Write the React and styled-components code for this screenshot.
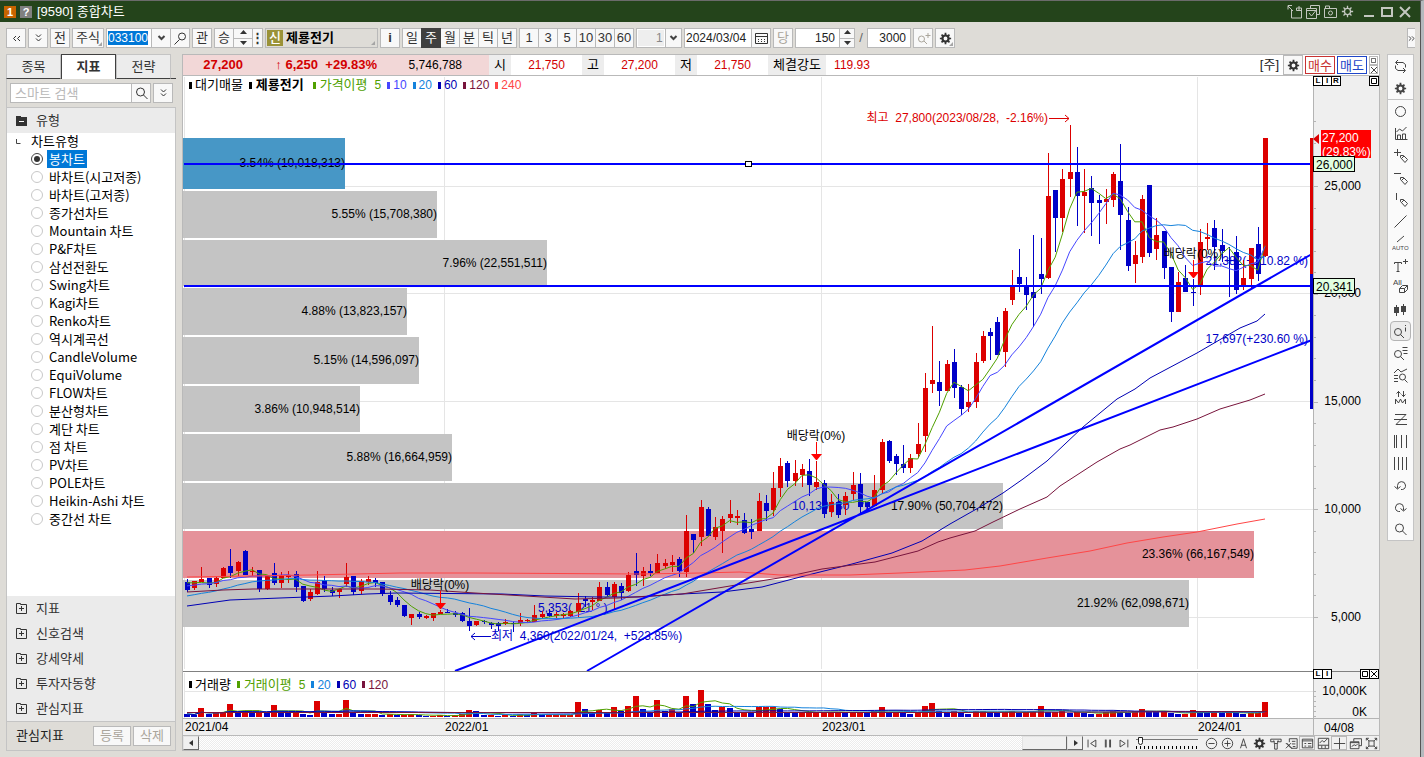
import React, { useState } from "react";
import styled, { createGlobalStyle, css } from "styled-components";

const GlobalStyle = createGlobalStyle`
  * {
    box-sizing: border-box;
  }
  body {
    margin: 0;
    background: #dedcd7;
  }
  body, button, input, select {
    font-family: "Liberation Sans", "Noto Sans CJK KR", sans-serif;
    font-size: 13px;
    line-height: 16px;
    color: #222;
  }
  button, input, select {
    margin: 0;
    padding: 0;
    border-radius: 0;
    outline: none;
  }
  svg {
    flex: none;
  }
  ::selection {
    background: #0078d7;
    color: #fff;
  }
`;

const Window = styled.div`
  display: flex;
  flex-direction: column;
  min-height: 100vh;
  border-top: 1px solid #6b6b6b;
  border-right: 3px solid #b4b9bd;
  box-shadow: inset -1px 0 #555;
  overflow: hidden;
`;

const TitleBar = styled.header`
  display: flex;
  align-items: center;
  gap: 4px;
  height: 21px;
  margin-right: 1px;
  padding: 0 7px 0 4px;
  background: #24441b;
  color: #fff;
`;

const TitleBadge = styled.span`
  width: 12px;
  height: 12px;
  background: ${({ bg }) => bg};
  font-size: 11px;
  font-weight: 700;
  line-height: 12px;
  text-align: center;
`;

const Title = styled.h1`
  flex: 1;
  margin: 0 0 0 1px;
  font-size: 13px;
  font-weight: 400;
`;

const TitleButton = styled.button`
  display: flex;
  align-items: center;
  width: ${({ w }) => w || 14}px;
  height: 15px;
  border: 0;
  background: none;
  color: #c3c7c0;
`;

const Toolbar = styled.div`
  display: flex;
  align-items: center;
  gap: 2px;
  height: 32px;
  padding-left: 6px;
`;

const Group = styled.div`
  display: flex;
  height: 20px;
  & > * + * {
    margin-left: -1px;
  }
`;

const ToolButton = styled.button`
  display: flex;
  flex: none;
  align-items: center;
  justify-content: center;
  position: relative;
  width: ${({ w }) => w || 20}px;
  height: 20px;
  border: 1px solid #b9b9b9;
  background: #f8f8f8;
  color: ${({ dim }) => (dim ? "#aaa59b" : "#333")};
  font-weight: ${({ bold }) => (bold ? 700 : 400)};
  ${({ active }) =>
    active &&
    css`
      z-index: 1;
      border-color: #404040;
      background: #404040;
      color: #fff;
    `}
  ${({ corner }) =>
    corner &&
    css`
      &::after {
        content: "";
        position: absolute;
        right: 1px;
        bottom: 1px;
        border: 2px solid;
        border-color: transparent #a5a5a5 #a5a5a5 transparent;
      }
    `}
`;

const Field = styled.input`
  width: ${({ w }) => w}px;
  height: 20px;
  padding: 0 ${({ pad }) => pad || 1}px;
  border: 1px solid #b9b9b9;
  background: #fff;
  font-size: 12px;
  text-align: ${({ align }) => align || "left"};
`;

const UnitSelect = styled.select`
  width: 30px;
  height: 20px;
  padding-left: 19px;
  appearance: none;
  border: 1px solid #b9b9b9;
  background: #eee;
  box-shadow: inset 0 0 0 1px #fff;
  color: #888;
  font-size: 12px;
`;

const Spinner = styled.div`
  display: flex;
  flex-direction: column;
  width: ${({ w }) => w || 16}px;
  height: 20px;
`;

const SpinButton = styled.button`
  display: flex;
  flex: 1;
  align-items: center;
  justify-content: center;
  border: 1px solid #b9b9b9;
  background: #f8f8f8;
  & + & {
    border-top: 0;
  }
`;

const StockName = styled.button`
  display: flex;
  align-items: center;
  position: relative;
  width: 113px;
  height: 20px;
  padding: 0 1px;
  gap: 3px;
  border: 1px solid #b9b9b9;
  background: #dedcd7;
  color: #000;
  font-weight: 700;
  &::after {
    content: "";
    position: absolute;
    right: 2px;
    bottom: 2px;
    border: 2px solid;
    border-color: transparent #a5a5a5 #a5a5a5 transparent;
  }
`;

const StockMark = styled.span`
  width: 16px;
  height: 16px;
  background: #9a9238;
  color: #fff;
  font-weight: 500;
  line-height: 15px;
`;

const Slash = styled.span`
  width: 8px;
  color: #666;
  text-align: center;
`;

const MoreButton = styled(ToolButton)`
  margin: 0 6px 0 auto;
  border-right: 0;
`;

const Body = styled.div`
  display: flex;
  flex: 1;
  gap: 7px;
  padding: 0 7px 6px 6px;
`;

const Sidebar = styled.aside`
  display: flex;
  flex: none;
  flex-direction: column;
  width: 170px;
  margin-right: -1px;
`;

const Tabs = styled.div`
  display: flex;
  height: 25px;
  border-bottom: 1px solid #404040;
`;

const Tab = styled.button`
  width: 55px;
  height: 25px;
  border: 1px solid ${({ active }) => (active ? "#404040" : "#c4c4c4")};
  border-bottom: ${({ active }) => (active ? "0" : "1px solid #404040")};
  background: ${({ active }) => (active ? "#fff" : "#ececec")};
  color: #333;
  font-weight: ${({ active }) => (active ? 700 : 400)};
`;

const SearchRow = styled.form`
  display: flex;
  height: 28px;
  padding: 4px 3px;
  border-left: 1px solid #c4c4c4;
`;

const SearchField = styled.input`
  flex: 1;
  min-width: 0;
  height: 20px;
  padding: 0 4px;
  border: 1px solid #b9b9b9;
  border-right: 0;
  font-size: 13px;
  &::placeholder {
    color: #b9b9b9;
  }
`;

const DropButton = styled(ToolButton)`
  margin-left: 2px;
`;

const Folder = styled.button`
  display: flex;
  flex: none;
  align-items: center;
  gap: 9px;
  height: 25px;
  padding: 0 9px;
  border: 0;
  background: #ebebeb;
  color: #333;
`;

const Panel = styled.div`
  display: flex;
  flex: 1;
  flex-direction: column;
  border: 1px solid #c4c4c4;
`;

const Tree = styled.fieldset`
  flex: 1;
  margin: 0;
  min-width: 0;
  padding: 0 0 0 24px;
  border: 0;
  background: #fff;
`;

const TreeTitle = styled.div`
  display: flex;
  align-items: center;
  gap: 10px;
  height: 17px;
  margin-left: -16px;
  color: #000;
`;

const Option = styled.label`
  display: flex;
  align-items: center;
  gap: 4px;
  height: 18px;
  color: #000;
  font-family: "Noto Sans CJK KR", sans-serif;
  & > span {
    padding: 0 2px;
    height: 18px;
    line-height: 18px;
  }
  & > input {
    flex: none;
    display: grid;
    place-items: center;
    width: 12px;
    height: 12px;
    appearance: none;
    border: 1px solid #c8c8c8;
    border-radius: 50%;
    background: #fff;
  }
  & > input:checked {
    border-color: #444;
  }
  & > input:checked::after {
    content: "";
    width: 6px;
    height: 6px;
    border-radius: 50%;
    background: #333;
  }
  & > input:checked + span {
    background: #0078d7;
    color: #fff;
  }
`;

const PanelFooter = styled.div`
  display: flex;
  align-items: center;
  gap: 2px;
  height: 29px;
  padding: 0 4px 0 9px;
  border-top: 1px solid #c4c4c4;
  & > span {
    flex: 1;
  }
`;

const Main = styled.main`
  flex: 1;
  min-width: 0;
  border: 1px solid #b9b9b9;
  background: #fff;
`;

const Quote = styled.div`
  display: flex;
  height: 21px;
  border-bottom: 1px solid #b9b9b9;
  line-height: 20px;
`;

const QuoteMain = styled.div`
  display: flex;
  width: 306px;
  background: #f2d7d7;
  color: #d20000;
  font-weight: 700;
  text-align: right;
  & > span:nth-child(1) {
    width: 60px;
  }
  & > span:nth-child(2) {
    width: 75px;
  }
  & > span:nth-child(3) {
    width: 59px;
  }
  & > span:nth-child(4) {
    width: 85px;
    color: #000;
    font-size: 12px;
    font-weight: 400;
  }
`;

const QuoteLabel = styled.span`
  width: ${({ w }) => w || 22}px;
  background: #ededed;
  color: #000;
  text-align: center;
`;

const QuoteValue = styled.span`
  width: ${({ w }) => w || 71}px;
  color: #d20000;
  font-size: 12px;
  text-align: center;
`;

const QuoteActions = styled.div`
  display: flex;
  align-items: center;
  gap: 2px;
  margin-left: auto;
  & > span {
    margin-right: 2px;
  }
`;

const TradeButton = styled.button`
  width: 30px;
  height: 18px;
  border: 1px solid ${({ tone }) => tone};
  background: #fff;
  color: ${({ tone }) => tone};
  line-height: 15px;
`;

const MiniStack = styled.div`
  display: flex;
  flex-direction: column;
  width: 10px;
  & > button {
    display: flex;
    align-items: center;
    justify-content: center;
    width: 9px;
    height: 9px;
    border: 1px solid #b9b9b9;
    background: #fff;
    color: #444;
  }
`;

const ChartArea = styled.div`
  position: relative;
  & > svg {
    display: block;
    width: 100%;
    height: auto;
  }
`;

const Legend = styled.div`
  position: absolute;
  top: ${({ top }) => top}%;
  left: 6px;
  display: flex;
  gap: 6px;
  height: 18px;
`;

const LegendName = styled.span`
  display: flex;
  align-items: center;
  gap: ${({ wide }) => (wide ? 4 : 3)}px;
  color: ${({ tone }) => tone};
  font-size: 12px;
  font-weight: ${({ bold }) => (bold ? 700 : 400)};
  & > b {
    margin-right: ${({ wide }) => (wide ? 3 : 0)}px;
    font-weight: inherit;
    font-size: 13px;
  }
  &::before {
    content: "";
    width: 3px;
    height: 7px;
    background: currentColor;
  }
`;

const CornerButtons = styled.div`
  position: absolute;
  top: ${({ top }) => top}%;
  right: 1px;
  display: flex;
  width: 65px;
  & > button {
    display: flex;
    align-items: center;
    justify-content: center;
    width: 10px;
    height: 10px;
    margin-right: -1px;
    border: 1px solid #000;
    background: #fff;
    color: #000;
    font-size: 8px;
    font-weight: 700;
    line-height: 8px;
  }
  & > i {
    flex: 1;
  }
`;

const BottomBar = styled.div`
  display: flex;
  height: 15px;
  border-top: 1px solid #b9b9b9;
  background: #f0f0f0;
`;

const ScrollTrack = styled.div`
  display: flex;
  flex: 1;
  background: repeating-conic-gradient(#fff 0 25%, #ececec 0 50%) 0 0 / 2px 2px;
`;

const ScrollButton = styled.button`
  display: flex;
  align-items: center;
  justify-content: center;
  width: ${({ w }) => w || 16}px;
  height: 14px;
  border: 1px solid;
  border-color: #e3e3e3 #696969 #696969 #e3e3e3;
  background: #f0f0f0;
`;

const ScrollGap = styled.i`
  flex: 1;
`;

const BarButton = styled.button`
  display: flex;
  align-items: center;
  justify-content: center;
  width: 16px;
  height: 14px;
  border: ${({ pressed }) => (pressed ? "1px solid #b9b9b9" : "0")};
  background: none;
  color: #333;
`;

const Zoom = styled.input`
  appearance: none;
  width: 62px;
  height: 14px;
  margin: 0 5px 0 5px;
  background:
    linear-gradient(#777, #777) 0 3px / 100% 1px no-repeat,
    repeating-linear-gradient(90deg, #000 0 1px, transparent 1px 4px) 0 10px / 100% 3px no-repeat;
  &::-webkit-slider-thumb {
    appearance: none;
    width: 5px;
    height: 8px;
    margin-top: -5px;
    border: 1px solid #222;
    border-radius: 0 0 3px 3px;
    background: #fff;
  }
`;

const ToolStrip = styled.nav`
  align-self: flex-start;
  display: flex;
  flex: none;
  flex-direction: column;
  width: 27px;
  border: 1px solid #c4c4c4;
  background: #fafafa;
`;

const StripButton = styled.button`
  display: flex;
  align-items: center;
  justify-content: center;
  height: 22px;
  border: 0;
  background: none;
  color: #444;
  ${({ active }) =>
    active &&
    css`
      height: 20px;
      margin: 1px 2px;
      border: 1px solid #b4b4b4;
      border-radius: 4px;
      background: #ececec;
    `}
`;

const StripRule = styled.hr`
  width: 100%;
  margin: 0;
  border: 0;
  border-top: 1px solid #c4c4c4;
`;

const paths = {
  search: "M10.5 6a4 4 0 1 1-8 0a4 4 0 0 1 8 0M9.5 9l4 4",
  searchLeft: "M12.5 5.5a3.5 3.5 0 1 1-7 0a3.5 3.5 0 0 1 7 0M6.5 8.5l-5 5",
  chevrons: "M5 3.5l2.5 2.5l2.5-2.5M5 7.5l2.5 2.5l2.5-2.5",
  chevronsLeft: "M7 5l-2.5 2.5l2.5 2.5M11 5l-2.5 2.5l2.5 2.5",
  chevronsRight: "M4.5 5l2.5 2.5l-2.5 2.5M8 5l2.5 2.5l-2.5 2.5",
  calendar: "M1.5 2.5h12v10h-12zM1.5 5.5h12M4 8.5h1M7 8.5h1M10 8.5h1M4 10.5h1M7 10.5h1M10 10.5h1",
  searchPlus: "M8.5 8a3 3 0 1 1-6 0a3 3 0 0 1 6 0M8 10l3 3M9.5 4.5h5M12 2v5",
  searchInfo: "M8.5 8a3.5 3.5 0 1 1-7 0a3.5 3.5 0 0 1 7 0M7.5 10.5l3.5 3.5M12.5 1v1M12.5 3.5v4",
  searchList: "M8.5 8a3.5 3.5 0 1 1-7 0a3.5 3.5 0 0 1 7 0M7.5 10.5l3.5 3.5M9.5 1.5h5M9.5 4.5h5M10.5 7.5h4",
  undock: "M4.5 6v8h10v-10h-5M9.5 4v2.5h5M12 2v4M1 2l5 5M1 5.5v-4h4",
  windows: "M5.5 4.5v-3h9v9h-3M1.5 4.5h10v10h-10zM1.5 6.5h10M4 9l2.5 3l4-5",
  camera: "M1.5 4.5h12v9h-12zM2.5 4v-2h4v2M9.5 9a2 2 0 1 1-4 0a2 2 0 0 1 4 0",
  refresh: "M5 1l-2.5 2.5l2.5 2.5M3 3.5h7l2.5 2v3M10 14l2.5-2.5l-2.5-2.5M12 11.5h-7l-2.5-2v-3",
  circle: "M12.5 7.5a5 5 0 1 1-10 0a5 5 0 0 1 10 0",
  bars: "M2.5 2v11.5h12M4.5 13v-4h3v4M9.5 13v-5h3v5M3.5 6l3-3l3 2l4-4",
  penPlus: "M4.5 1v7M1 4.5h7M7.5 7.5h3l4 4l-2.5 3l-4.5-5zM9 10l2-2",
  penLine: "M1 3.5h7M7.5 7.5h3l4 4l-2.5 3l-4.5-5zM9 10l2-2",
  penVert: "M3.5 1v7M7.5 7.5h3l4 4l-2.5 3l-4.5-5zM9 10l2-2",
  line: "M1.5 13.5l12-12",
  text: "M1.5 6v-1.5h7v1.5M5 5v8.5M3.5 13.5h3M10 3.5h5M12.5 1v5",
  erase: "M6.5 9.5h5v4h-5zM6.5 9.5l3-3h5l-3 3M14.5 6.5v4l-3 3",
  indicator: "M1 5l4-4l3 3l6-3M1 7.5h4M1 10.5h4M1 13.5h4M12.5 9a3 3 0 1 1-6 0a3 3 0 0 1 6 0M11.5 11.5l3 3",
  updown: "M5.5 1v6M3.5 3.5l2-2l2 2M10.5 1v6M8.5 4.5l2 2l2-2M2.5 14v-5l3 4l2-4l2 4l3-4v5",
  zed: "M2 2.5h11l-10 10h11M1 7.5h13",
  vbarsA: "M1.5 1v13M3.5 1v13M8.5 1v13M13.5 1v13",
  vbarsB: "M1.5 1v13M5.5 1v13M9.5 1v13M13.5 1v13",
  undo: "M8 11.5h1.5a4 4 0 1 0-5-4v3M1.5 8.5l3 2.5l3-2.5",
  redo: "M7 11.5h-1.5a4 4 0 1 1 5-4v3M13.5 8.5l-3 2.5l-3-2.5",
  first: "M3.5 3v9M12.5 3.5v8l-6-4z",
  pause: "M5 3v9M6 3v9M10 3v9M11 3v9",
  last: "M12.5 3v9M3.5 3.5v8l6-4z",
  minus: "M13.5 7.5a6 6 0 1 1-12 0a6 6 0 0 1 12 0M4 7.5h7",
  plus: "M13.5 7.5a6 6 0 1 1-12 0a6 6 0 0 1 12 0M4 7.5h7M7.5 4v7",
  letter: "M4 13l3.5-11l3.5 11M5 9.5h5",
  hammer: "M2 5.5v-3h12v3h-3v-1h-1v3h-4v-3h-1v1zM6.5 8v6h3v-6",
  excel: "M5 6v-4h9v11h-7M8 5h4M8 8h4M9 11h3M1 7l6 6M7 7l-6 6M2 7l6 6",
  table: "M1.5 2.5h12v10h-12zM1.5 4.5h12M4 7.5h2M4 10.5h2M8 7.5h4M8 10.5h4",
  preview: "M1.5 1.5h12v12h-12zM1.5 9.5h12M5.5 10v3M9.5 10v3M3 7l3-3l2 2l4-4",
  cross: "M7.5 1v13M1 7.5h13",
  stack: "M5.5 5v-3h9v8h-3M1.5 5.5h10v8h-10zM1.5 6.5h10M3 11l3-2l2 1l2-2",
  expand: "M4.5 4.5h6v6h-6zM1.5 4v-2.5h3M11 1.5h2.5v2.5M13.5 11v2.5h-2.5M4 13.5h-2.5v-2.5M1.5 1.5l3 3M13.5 1.5l-3 3M1.5 13.5l3-3M13.5 13.5l-3-3",
};

const Icon = ({ name, size = 15 }) => (
  <svg width={size} height={size} viewBox="0 0 15 15" fill="none" stroke="currentColor">
    <path d={paths[name]} />
  </svg>
);

const Gear = ({ size = 15, thin }) => (
  <svg width={size} height={size} viewBox="0 0 15 15" fill="none" stroke="currentColor">
    <circle cx="7.5" cy="7.5" r="3.5" strokeWidth={thin ? 1.5 : 2.5} />
    {[0, 45, 90, 135].map((a) => (
      <path
        key={a}
        d="M7.5 1v2.5M7.5 11.5v2.5"
        strokeWidth={thin ? 1.5 : 2}
        transform={`rotate(${a} 7.5 7.5)`}
      />
    ))}
  </svg>
);

const Triangle = ({ dir = "up" }) => {
  const d = {
    up: "M0 4l3.5-4l3.5 4z",
    down: "M0 1h7l-3.5 4z",
    left: "M5 0v6l-4-3z",
    right: "M2 0v6l4-3z",
  };
  return (
    <svg width="7" height="6" viewBox="0 0 7 6" fill="#333">
      <path d={d[dir]} />
    </svg>
  );
};

const Chevron = () => (
  <svg width="9" height="6" viewBox="0 0 9 6" fill="none" stroke="#444" strokeWidth="2">
    <path d="M1.5 1l3 3l3-3" />
  </svg>
);

const BoxMark = ({ size = 6 }) => (
  <svg width={size} height={size} viewBox="0 0 6 6" fill="none" stroke="currentColor">
    <path d="M.5 .5h5v5h-5z" />
  </svg>
);

const CrossMark = () => (
  <svg width="6" height="6" viewBox="0 0 6 6" stroke="currentColor">
    <path d="M0 0l6 6M6 0l-6 6" />
  </svg>
);

const AutoIcon = () => (
  <svg width="17" height="16" viewBox="0 0 17 16" stroke="currentColor">
    <path d="M5 7l7-6" />
    <text x="0" y="15" fontSize="6" fill="currentColor" strokeWidth="0">AUTO</text>
  </svg>
);

const EraseIcon = () => (
  <svg width="16" height="16" viewBox="0 0 16 16" fill="none" stroke="currentColor">
    <path d={paths.erase} />
    <text x="0" y="6" fontSize="8" fill="currentColor" strokeWidth="0">All</text>
  </svg>
);

const CandleIcon = () => (
  <svg width="15" height="15" viewBox="0 0 15 15" fill="currentColor">
    <path d="M1 5h5v6h-5zM3 3h1v11h-1zM8 4h5v6h-5zM10 2h1v11h-1z" />
  </svg>
);

// side, body top, body bottom, high, low
const candles = `B582,590,579,592 R581,588,581,590 R579,582,567,582 B578,585,578,588 R578,584,576,587
R568,578,567,578 B566,573,549,578 R562,571,561,576 B551,575,550,575 R571,572,567,576
B570,589,570,592 R576,589,576,590 B573,583,563,585 R575,583,572,588 R575,577,571,583
B574,587,571,592 B586,601,586,602 R592,599,589,601 R582,594,571,595 B580,589,576,592
B590,593,587,596 R589,592,589,598 R577,584,563,587 B576,592,576,595 R581,591,579,594
R579,582,576,585 B580,583,578,587 B582,594,582,596 B595,602,591,605 B600,605,597,607
B605,616,605,617 R614,618,614,625 B614,617,612,619 R616,618,615,619 R613,618,613,621
R612,614,610,614 B612,613,609,613 B613,615,611,617 B613,621,612,622 B621,626,608,631
R621,625,621,626 B621,622,620,624 B623,625,622,629 B623,626,622,631 R622,624,619,625
B623,624,622,632 R620,623,613,626 R620,621,619,622 R615,622,605,622 R614,617,611,618
B613,616,609,617 R614,616,612,618 R614,616,613,619 R611,616,610,617 R603,612,593,617
B599,601,596,607 R600,602,597,610 R587,601,582,601 B587,595,582,596 R584,597,582,609
B586,593,583,600 R575,591,572,592 B571,575,553,586 R571,576,567,586 B571,573,564,576
R563,573,554,573 R563,566,559,569 R562,565,555,572 B559,571,557,577 R531,572,515,577
B534,540,534,553 R507,537,500,546 B509,536,507,536 R527,537,517,540 R519,531,516,553
R514,518,500,523 R516,518,510,525 B520,533,513,534 B529,532,519,539 R501,531,493,531
B503,511,495,521 R488,510,472,516 R466,488,458,497 B463,481,461,487 R473,481,460,486
R469,475,464,487 B471,485,459,496 R482,487,461,490 B483,514,480,518 R502,512,494,517
B502,515,494,518 R496,505,492,515 R485,494,472,500 B484,507,473,513 B502,507,502,509
R490,506,475,506 R442,490,439,493 B441,461,440,463 B456,464,454,475 B464,468,445,473
R458,468,454,473 R444,454,423,458 R388,436,373,452 R380,384,326,393 B382,391,361,406
R364,391,360,391 B362,388,349,398 B387,409,385,415 R402,407,384,412 R362,402,353,408
R336,361,331,363 B332,336,328,360 B322,355,317,355 R311,352,308,367 R286,300,270,305
B277,284,249,292 B287,295,277,310 B292,298,235,327 B274,279,238,294 R196,278,153,279
B190,218,190,252 R179,218,169,232 R172,179,125,197 B172,196,147,226 R192,196,169,233
B188,203,176,236 B200,203,195,244 R199,202,189,224 R174,200,172,207 B181,215,144,250
B220,266,207,271 R255,264,241,283 R199,257,195,263 B185,253,185,257 R235,249,218,260
B231,268,231,279 B267,312,267,322 R282,312,272,312 B278,292,265,292 B292,293,279,306
R242,285,229,295 R237,239,223,250 B228,247,220,270 B245,251,229,262 B260,261,247,297
B252,290,236,294 R278,285,260,290 R248,279,248,289 B244,274,227,281 R138,256,138,257`
  .split(/\s+/)
  .map((s) => {
    const [top, bottom, high, low] = s.slice(1).split(",").map(Number);
    return { up: s[0] === "R", top, bottom, high, low, close: s[0] === "R" ? top : bottom };
  });

const volumes = [
  3, 2, 9, 3, 4, 5, 13, 4, 6, 4, 5, 4, 12, 6, 4, 5, 3, 2, 16, 4, 3, 3, 17, 4, 3, 3, 3, 2, 3, 2,
  2, 3, 2, 1, 1, 2, 1, 2, 3, 7, 6, 2, 2, 1, 2, 1, 3, 2, 4, 2, 2, 2, 2, 2, 15, 8, 4, 7, 5, 10,
  6, 11, 21, 8, 4, 17, 6, 8, 4, 21, 13, 27, 13, 7, 10, 9, 5, 5, 4, 10, 10, 10, 8, 5, 4, 5, 5, 5, 5, 5,
  5, 4, 5, 5, 4, 6, 10, 5, 5, 4, 3, 5, 11, 14, 6, 4, 6, 5, 3, 6, 6, 5, 4, 5, 6, 4, 5, 6, 11, 5,
  5, 6, 4, 5, 4, 3, 3, 5, 6, 5, 4, 6, 8, 6, 5, 5, 4, 3, 3, 7, 5, 4, 5, 4, 5, 4, 3, 4, 4, 15,
];

const history = [...Array(10).fill(606), ...Array(5).fill(589), ...Array(4).fill(581)];
const closes = [...history, ...candles.map((c) => c.close)];

const xOf = (i) => 187 + (i * 1078) / 149;

const average = (list, from, n) => {
  const part = list.slice(Math.max(0, from - n + 1), from + 1);
  return part.reduce((a, b) => a + b, 0) / part.length;
};

const priceLine = (n) =>
  candles.map((c, i) => `${xOf(i)},${average(closes, i + history.length, n)}`).join(" ");

const volumeLine = (n) => volumes.map((v, i) => `${xOf(i)},${717 - average(volumes, i, n)}`).join(" ");

const longLines = [
  {
    color: "#0000b4",
    points:
      "187,606 230,600 280,598 333,596 367,594 397,593 502,594 545,596 600,597 638,597 682,594 722,592 762,587 808,575 852,564 892,553 922,541 950,524 980,507 1003,493 1023,479 1047,461 1083,427 1117,399 1135,389 1150,378 1197,353 1240,328 1257,321 1265,314",
  },
  {
    color: "#78143c",
    points:
      "187,592 223,590 253,589 380,589 430,590 475,593 542,597 575,599 618,598 682,594 742,584 785,577 822,569 875,562 918,551 938,542 950,538 975,531 993,522 1020,509 1047,497 1060,486 1097,462 1120,449 1130,445 1160,430 1173,427 1197,419 1220,409 1250,400 1265,394",
  },
  {
    color: "#ff4646",
    points:
      "187,577 310,575 400,573 475,573 640,574 700,573 740,572 780,575 850,575 900,573 965,570 1000,566 1047,558 1090,551 1127,543 1163,537 1197,532 1237,524 1265,519",
  },
];

const profile = [
  [138, 51, 345, "3.54% (10,018,313)", "#4797c6"],
  [191, 47, 437, "5.55% (15,708,380)"],
  [240, 46, 547, "7.96% (22,551,511)"],
  [288, 47, 407, "4.88% (13,823,157)"],
  [337, 47, 419, "5.15% (14,596,097)"],
  [386, 46, 360, "3.86% (10,948,514)"],
  [434, 47, 452, "5.88% (16,664,959)"],
  [483, 46, 1003, "17.90% (50,704,472)"],
  [531, 47, 1254, "23.36% (66,167,549)", "#e5929a"],
  [580, 47, 1189, "21.92% (62,098,671)"],
];

const RED = "#dc0000";
const BLUE = "#0000c8";

const ChartText = styled.text`
  font-size: 12px;
  fill: ${({ tone }) => tone || "#000"};
  text-anchor: ${({ anchor }) => anchor || "start"};
  white-space: pre;
`;

const Dividend = ({ x, y }) => (
  <g>
    <ChartText x={x} y={y - 14} anchor="middle">배당락(0%)</ChartText>
    <path d={`M${x + 0.5} ${y - 12}v12`} stroke="red" />
    <path d={`M${x - 5} ${y}h11l-5 6h-1z`} fill="red" />
  </g>
);

const Chart = () => (
  <svg viewBox="183 76 1196 659" role="img" aria-label="제룡전기 주봉">
    <rect x="1313" y="76" width="66" height="659" fill="#efefef" />
    <rect x="183" y="719" width="1130" height="16" fill="#efefef" />
    <g fill="#e5e5e5">
      {[187, 294, 402, 510, 618, 692].map((y) => (
        <rect key={y} x="184" y={y - 1} width="1129" height="1" />
      ))}
      {[184, 444, 821, 1197].map((x) => (
        <path key={x} d={`M${x} 77h1v592h-1zM${x} 673h1v45h-1z`} />
      ))}
    </g>

    {profile.map(([y, h, right, label, color]) => (
      <g key={label}>
        <rect x="183" y={y} width={right - 183} height={h} fill={color || "#c4c4c4"} />
        <ChartText x={right} y={y + Math.floor(h / 2) + 4} anchor="end">{label}</ChartText>
      </g>
    ))}

    <ChartText x="538" y="612" tone={BLUE}>5,353(  21 ° )</ChartText>
    <ChartText x="792" y="510" tone={BLUE}>10,139( 30   °)</ChartText>
    <ChartText x="1308" y="265" anchor="end" tone={BLUE}>21,382(+210.82 %)</ChartText>
    <ChartText x="1308" y="343" anchor="end" tone={BLUE}>17,697(+230.60 %)</ChartText>

    <g shapeRendering="crispEdges">
      {candles.map((c, i) => {
        const x = Math.round(xOf(i));
        return (
          <g key={i} fill={c.up ? RED : BLUE}>
            <rect x={x} y={c.high} width="1" height={c.low - c.high} />
            <rect x={x - 2} y={c.top} width="5" height={c.bottom - c.top} />
          </g>
        );
      })}
      {volumes.map((v, i) => (
        <rect
          key={i}
          x={Math.round(xOf(i)) - 3}
          y={717 - v}
          width="6"
          height={v}
          fill={i && v >= volumes[i - 1] ? RED : BLUE}
        />
      ))}
    </g>

    <g fill="none" strokeWidth="1">
      <polyline points={priceLine(5)} stroke="#50a000" />
      <polyline points={priceLine(10)} stroke="#4646ff" />
      <polyline points={priceLine(20)} stroke="#1482dc" />
      {longLines.map((l) => (
        <polyline key={l.color} points={l.points} stroke={l.color} />
      ))}
      <polyline points={volumeLine(5)} stroke="#50a000" />
      <polyline points={volumeLine(20)} stroke="#1482dc" />
      <polyline points={volumeLine(60)} stroke="#0000b4" />
      <path d="M187 712.5h780l300-1" stroke="#78143c" />
    </g>

    <g stroke="#0000ff" strokeWidth="2">
      <path d="M184 164h1129M184 286h1129" />
      <path d="M455 671l857-331M587 671l725-417" />
    </g>
    <rect x="745.5" y="161.5" width="6" height="5" fill="#fff" stroke="#000" />

    <ChartText x="1048" y="122" anchor="end" tone={RED}>최고  27,800(2023/08/28,  -2.16%)</ChartText>
    <path d="M1049 118.5h20M1065 115l4 3.5l-4 3.5" fill="none" stroke={RED} />
    <ChartText x="491" y="640" tone={BLUE}>최저  4,360(2022/01/24,  +523.85%)</ChartText>
    <path d="M491 636.5h-20M475 633l-4 3.5l4 3.5" fill="none" stroke={BLUE} />
    <Dividend x={440} y={603} />
    <Dividend x={816} y={454} />
    <Dividend x={1193} y={272} />

    <rect x="1310" y="138" width="3" height="136" fill={RED} />
    <rect x="1310" y="274" width="3" height="135" fill={BLUE} />
    <g fill="#b4b4b4">
      <rect x="1313" y="76" width="1" height="659" />
      {Array.from({ length: 24 }, (_, i) => (
        <rect
          key={i}
          x="1314"
          y={Math.round(617 - i * 21.55)}
          width={i % 5 ? 2 : 4}
          height="1"
        />
      ))}
      {[691, 696, 701, 706, 711, 716].map((y) => (
        <rect key={y} x="1314" y={y} width="2" height="1" />
      ))}
      <rect x="183" y="718" width="1196" height="1" />
    </g>
    <rect x="183" y="671" width="1196" height="1" fill="#808080" />

    {[
      ["25,000", 190],
      ["20,000", 297],
      ["15,000", 405],
      ["10,000", 513],
      ["5,000", 621],
    ].map(([label, y]) => (
      <ChartText key={label} x="1361" y={y} anchor="end">{label}</ChartText>
    ))}
    <ChartText x="1367" y="695" anchor="end">10,000K</ChartText>
    <ChartText x="1367" y="716" anchor="end">0K</ChartText>
    <ChartText x="1324" y="732">04/08</ChartText>
    {[
      ["2021/04", 185],
      ["2022/01", 445],
      ["2023/01", 822],
      ["2024/01", 1198],
    ].map(([label, x]) => (
      <ChartText key={label} x={x} y="731">{label}</ChartText>
    ))}

    <path d="M1313 139l6-5v10z" fill={RED} />
    <rect x="1321" y="130" width="50" height="28" fill="red" />
    <ChartText x="1322" y="142" tone="#fff">27,200</ChartText>
    <ChartText x="1322" y="156" tone="#fff">(29.83%)</ChartText>
    <g fill="#e1ffe1" stroke="#000">
      <rect x="1313.5" y="156.5" width="41" height="15" />
      <rect x="1313.5" y="278.5" width="41" height="15" />
    </g>
    <ChartText x="1316" y="169">26,000</ChartText>
    <ChartText x="1316" y="291">20,341</ChartText>
  </svg>
);

const chartTypes = [
  "봉차트",
  "바차트(시고저종)",
  "바차트(고저종)",
  "종가선차트",
  "Mountain 차트",
  "P&F차트",
  "삼선전환도",
  "Swing차트",
  "Kagi차트",
  "Renko차트",
  "역시계곡선",
  "CandleVolume",
  "EquiVolume",
  "FLOW차트",
  "분산형차트",
  "계단 차트",
  "점 차트",
  "PV차트",
  "POLE차트",
  "Heikin-Ashi 차트",
  "중간선 차트",
];

const folders = ["지표", "신호검색", "강세약세", "투자자동향", "관심지표"];
const periods = ["일", "주", "월", "분", "틱", "년"];
const minutes = ["1", "3", "5", "10", "30", "60"];

const stripTools = [
  "circle", "bars", "penPlus", "penLine", "penVert", "line", "auto", "text", "erase", "candle",
  "searchInfo", "searchList", "indicator", "updown", "zed", "vbarsA", "vbarsB", "undo", "redo", "search",
];

const barTools = ["minus", "plus", "letter", "gear", "hammer", "excel", "table", "preview", "cross", "stack", "expand"];

const stripIcon = (name) => {
  if (name === "auto") return <AutoIcon />;
  if (name === "erase") return <EraseIcon />;
  if (name === "candle") return <CandleIcon />;
  return <Icon name={name} />;
};

const TopToolbar = () => {
  const [period, setPeriod] = useState("주");

  return (
    <Toolbar>
      <ToolButton aria-label="이전"><Icon name="chevronsLeft" /></ToolButton>
      <ToolButton aria-label="목록"><Icon name="chevrons" /></ToolButton>
      <ToolButton>전</ToolButton>
      <ToolButton w={32} corner>주식</ToolButton>
      <Group>
        <Field
          w={46}
          aria-label="종목코드"
          defaultValue="033100"
          autoFocus
          onFocus={(e) => e.target.select()}
        />
        <ToolButton aria-label="최근 종목"><Chevron /></ToolButton>
        <ToolButton aria-label="종목 검색"><Icon name="searchLeft" /></ToolButton>
      </Group>
      <ToolButton>관</ToolButton>
      <Group>
        <ToolButton>승</ToolButton>
        <Spinner w={20}>
          <SpinButton aria-label="위"><Triangle /></SpinButton>
          <SpinButton aria-label="아래"><Triangle dir="down" /></SpinButton>
        </Spinner>
        <ToolButton w={11} bold>⋮</ToolButton>
      </Group>
      <StockName>
        <StockMark>신</StockMark>
        제룡전기
      </StockName>
      <ToolButton bold>i</ToolButton>
      <Group>
        {periods.map((p) => (
          <ToolButton key={p} active={p === period || undefined} onClick={() => setPeriod(p)}>
            {p}
          </ToolButton>
        ))}
      </Group>
      <Group>
        {minutes.map((m) => (
          <ToolButton key={m}>{m}</ToolButton>
        ))}
      </Group>
      <Group>
        <UnitSelect aria-label="단위">
          <option>1</option>
        </UnitSelect>
        <ToolButton w={17} aria-label="단위 열기"><Chevron /></ToolButton>
      </Group>
      <Group>
        <Field w={68} aria-label="날짜" defaultValue="2024/03/04" />
        <ToolButton aria-label="달력"><Icon name="calendar" /></ToolButton>
      </Group>
      <ToolButton dim>당</ToolButton>
      <Group>
        <Field w={45} pad={4} align="right" aria-label="표시 개수" defaultValue="150" />
        <Spinner>
          <SpinButton aria-label="늘리기"><Triangle /></SpinButton>
          <SpinButton aria-label="줄이기"><Triangle dir="down" /></SpinButton>
        </Spinner>
      </Group>
      <Slash>/</Slash>
      <Field w={44} pad={4} align="right" aria-label="전체 개수" defaultValue="3000" />
      <ToolButton dim aria-label="확대"><Icon name="searchPlus" /></ToolButton>
      <ToolButton corner aria-label="설정"><Gear size={13} /></ToolButton>
      <MoreButton w={8} aria-label="더보기"><Icon name="chevronsRight" size={13} /></MoreButton>
    </Toolbar>
  );
};

const SidePanel = () => (
  <Sidebar>
    <Tabs>
      <Tab>종목</Tab>
      <Tab active>지표</Tab>
      <Tab>전략</Tab>
    </Tabs>
    <SearchRow onSubmit={(e) => e.preventDefault()}>
      <SearchField placeholder="스마트 검색" aria-label="스마트 검색" />
      <ToolButton aria-label="검색"><Icon name="search" /></ToolButton>
      <DropButton type="button" aria-label="펼치기"><Icon name="chevrons" /></DropButton>
    </SearchRow>
    <Panel>
      <Folder>
        <svg width="11" height="10" viewBox="0 0 11 10">
          <path d="M0 0h5v1h6v9h-11z" fill="#333" />
          <path d="M3 5.5h5" stroke="#fff" />
        </svg>
        유형
      </Folder>
      <Tree>
        <TreeTitle>
          <svg width="6" height="6" viewBox="0 0 6 6" fill="none" stroke="#444">
            <path d="M1.5 0v4.5h4" />
          </svg>
          차트유형
        </TreeTitle>
        {chartTypes.map((t, i) => (
          <Option key={t}>
            <input type="radio" name="chartType" defaultChecked={i === 0} />
            <span>{t}</span>
          </Option>
        ))}
      </Tree>
      {folders.map((f) => (
        <Folder key={f}>
          <svg width="11" height="11" viewBox="0 0 11 11" fill="none" stroke="#333">
            <path d="M.5 .5h4v1h6v9h-10zM5.5 3v5M3 5.5h5" />
          </svg>
          {f}
        </Folder>
      ))}
      <PanelFooter>
        <span>관심지표</span>
        <ToolButton w={38} dim>등록</ToolButton>
        <ToolButton w={38} dim>삭제</ToolButton>
      </PanelFooter>
    </Panel>
  </Sidebar>
);

const ChartPanel = () => (
  <Main>
    <Quote>
      <QuoteMain>
        <span>27,200</span>
        <span>↑ 6,250</span>
        <span>+29.83%</span>
        <span>5,746,788</span>
      </QuoteMain>
      <QuoteLabel>시</QuoteLabel>
      <QuoteValue>21,750</QuoteValue>
      <QuoteLabel>고</QuoteLabel>
      <QuoteValue>27,200</QuoteValue>
      <QuoteLabel>저</QuoteLabel>
      <QuoteValue>21,750</QuoteValue>
      <QuoteLabel w={58}>체결강도</QuoteLabel>
      <QuoteValue w={52}>119.93</QuoteValue>
      <QuoteActions>
        <span>[주]</span>
        <ToolButton aria-label="차트 설정"><Gear size={13} /></ToolButton>
        <TradeButton tone="#c83232">매수</TradeButton>
        <TradeButton tone="#1e46c8">매도</TradeButton>
        <MiniStack>
          <button aria-label="최대화"><BoxMark size={5} /></button>
          <button aria-label="닫기"><CrossMark /></button>
        </MiniStack>
      </QuoteActions>
    </Quote>
    <ChartArea>
      <Chart />
      <Legend top={0}>
        <LegendName tone="#000"><b>대기매물</b></LegendName>
        <LegendName tone="#000" wide bold><b>제룡전기</b></LegendName>
        <LegendName tone="#50a000" wide><b>가격이평</b> 5</LegendName>
        <LegendName tone="#4646ff">10</LegendName>
        <LegendName tone="#1482dc">20</LegendName>
        <LegendName tone="#0000b4">60</LegendName>
        <LegendName tone="#78143c">120</LegendName>
        <LegendName tone="#ff4646">240</LegendName>
      </Legend>
      <Legend top={91}>
        <LegendName tone="#000"><b>거래량</b></LegendName>
        <LegendName tone="#50a000" wide><b>거래이평</b> 5</LegendName>
        <LegendName tone="#1482dc">20</LegendName>
        <LegendName tone="#0000b4">60</LegendName>
        <LegendName tone="#78143c">120</LegendName>
      </Legend>
      <CornerButtons top={0}>
        <button>L</button>
        <button>I</button>
        <button>R</button>
        <i />
        <button aria-label="확대"><BoxMark /></button>
      </CornerButtons>
      <CornerButtons top={90}>
        <button>L</button>
        <button>I</button>
        <i />
        <button aria-label="확대"><BoxMark /></button>
        <button aria-label="닫기"><CrossMark /></button>
      </CornerButtons>
    </ChartArea>
    <BottomBar>
      <ScrollTrack>
        <ScrollButton aria-label="왼쪽"><Triangle dir="left" /></ScrollButton>
        <ScrollGap />
        <ScrollButton w={45} aria-label="스크롤" />
        <ScrollButton aria-label="오른쪽"><Triangle dir="right" /></ScrollButton>
      </ScrollTrack>
      <BarButton aria-label="처음"><Icon name="first" size={13} /></BarButton>
      <BarButton aria-label="일시정지"><Icon name="pause" size={13} /></BarButton>
      <BarButton aria-label="마지막"><Icon name="last" size={13} /></BarButton>
      <Zoom type="range" min="0" max="100" defaultValue="4" aria-label="봉 간격" />
      {barTools.map((t) => (
        <BarButton key={t} aria-label={t} pressed={t === "table" || t === "cross" || undefined}>
          {t === "gear" ? <Gear size={13} /> : <Icon name={t} size={13} />}
        </BarButton>
      ))}
    </BottomBar>
  </Main>
);

const App = () => (
  <Window>
    <GlobalStyle />
    <TitleBar>
      <TitleBadge bg="#c86400">1</TitleBadge>
      <TitleBadge bg="#808080">?</TitleBadge>
      <Title>[9590] 종합차트</Title>
      <TitleButton aria-label="분리"><Icon name="undock" /></TitleButton>
      <TitleButton aria-label="복사"><Icon name="windows" /></TitleButton>
      <TitleButton aria-label="캡처"><Icon name="camera" /></TitleButton>
      <TitleButton w={18} aria-label="설정"><Gear size={13} thin /></TitleButton>
      <TitleButton aria-label="최소화">
        <svg width="12" height="14" viewBox="0 0 12 14" fill="currentColor"><path d="M1 10h10v2h-10z" /></svg>
      </TitleButton>
      <TitleButton aria-label="최대화">
        <svg width="12" height="14" viewBox="0 0 12 14" fill="none" stroke="currentColor" strokeWidth="2"><path d="M1 3h10v8h-10z" /></svg>
      </TitleButton>
      <TitleButton aria-label="닫기">
        <svg width="12" height="14" viewBox="0 0 12 14" stroke="currentColor" strokeWidth="2"><path d="M1 2l10 10M11 2l-10 10" /></svg>
      </TitleButton>
    </TitleBar>
    <TopToolbar />
    <Body>
      <SidePanel />
      <ChartPanel />
      <ToolStrip>
        <StripButton aria-label="새로고침"><Icon name="refresh" /></StripButton>
        <StripButton aria-label="설정"><Gear size={13} /></StripButton>
        <StripRule />
        {stripTools.map((t) => (
          <StripButton key={t} aria-label={t} active={t === "searchInfo" || undefined}>
            {stripIcon(t)}
          </StripButton>
        ))}
      </ToolStrip>
    </Body>
  </Window>
);

export default App;
